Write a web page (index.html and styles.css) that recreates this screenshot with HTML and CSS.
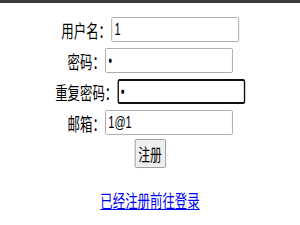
FILE: index.html
```html
<!DOCTYPE html>
<html lang="zh-CN">
<head>
    <meta charset="UTF-8">
    <meta name="viewport" content="width=device-width, initial-scale=1.0">
    <title>注册</title>
    <link rel="stylesheet" href="styles.css">
</head>
<body>
    <div class="top-bar"></div>

    <div class="page">
        <!-- register form -->
        <form class="reg-form" onsubmit="return false">
            <div class="form-row">
                <label for="username">用户名：</label>
                <input type="text" id="username" class="field" value="1">
            </div>
            <div class="form-row">
                <label for="password">密码：</label>
                <input type="password" id="password" class="field" value="1">
            </div>
            <div class="form-row">
                <label for="repassword">重复密码：</label>
                <input type="password" id="repassword" class="field active" value="1">
            </div>
            <div class="form-row">
                <label for="email">邮箱：</label>
                <input type="text" id="email" class="field" value="1@1">
            </div>
            <div class="form-actions">
                <button type="submit" class="btn">注册</button>
            </div>
        </form>

        <p class="login-link"><a href="#">已经注册前往登录</a></p>
    </div>
</body>
</html>
```

FILE: styles.css
```css
body {
    margin: 0;
    background-color: #ffffff;
    font-family: "Noto Sans CJK SC", "Liberation Sans", sans-serif;
    color: #000000;
}
.top-bar {
    height: 3px;
    background-color: #3a3a3a;
}
.page {
    width: 300px;
    transform: scaleX(0.69); /* squeezed, like the screenshot */
    transform-origin: 50% 0;
}
.reg-form {
    padding-top: 14px;
}
.form-row {
    display: flex;
    justify-content: center;
    align-items: center;
    height: 25px;
    margin-bottom: 6px;
}
.form-row label {
    font-size: 18px;
    line-height: 22px;
    white-space: nowrap;
}
.field {
    box-sizing: border-box;
    width: 185px;
    height: 25px;
    margin: 0;
    padding: 1px 4px;
    border: 1px solid #a0a0a0;
    border-radius: 2px;
    font-family: "Liberation Sans", Arial, sans-serif;
    font-size: 16px;
    color: #000000;
    background: #ffffff;
}
.field.active {
    border: 2px solid #101010;
    border-radius: 3px;
    padding: 0 3px;
}
.form-actions {
    display: flex;
    justify-content: center;
    margin-top: -2px;
}
.btn {
    box-sizing: border-box;
    width: 45px;
    height: 29px;
    padding: 0;
    border: 1px solid #8f8f8f;
    border-radius: 2px;
    background-color: #efefef;
    font-family: "Noto Sans CJK SC", sans-serif;
    font-size: 17px;
    color: #000000;
}
.login-link {
    margin: 21px 0 0;
    text-align: center;
    font-size: 18px;
    line-height: 22px;
}
.login-link a {
    color: #0000ee;
}
```
